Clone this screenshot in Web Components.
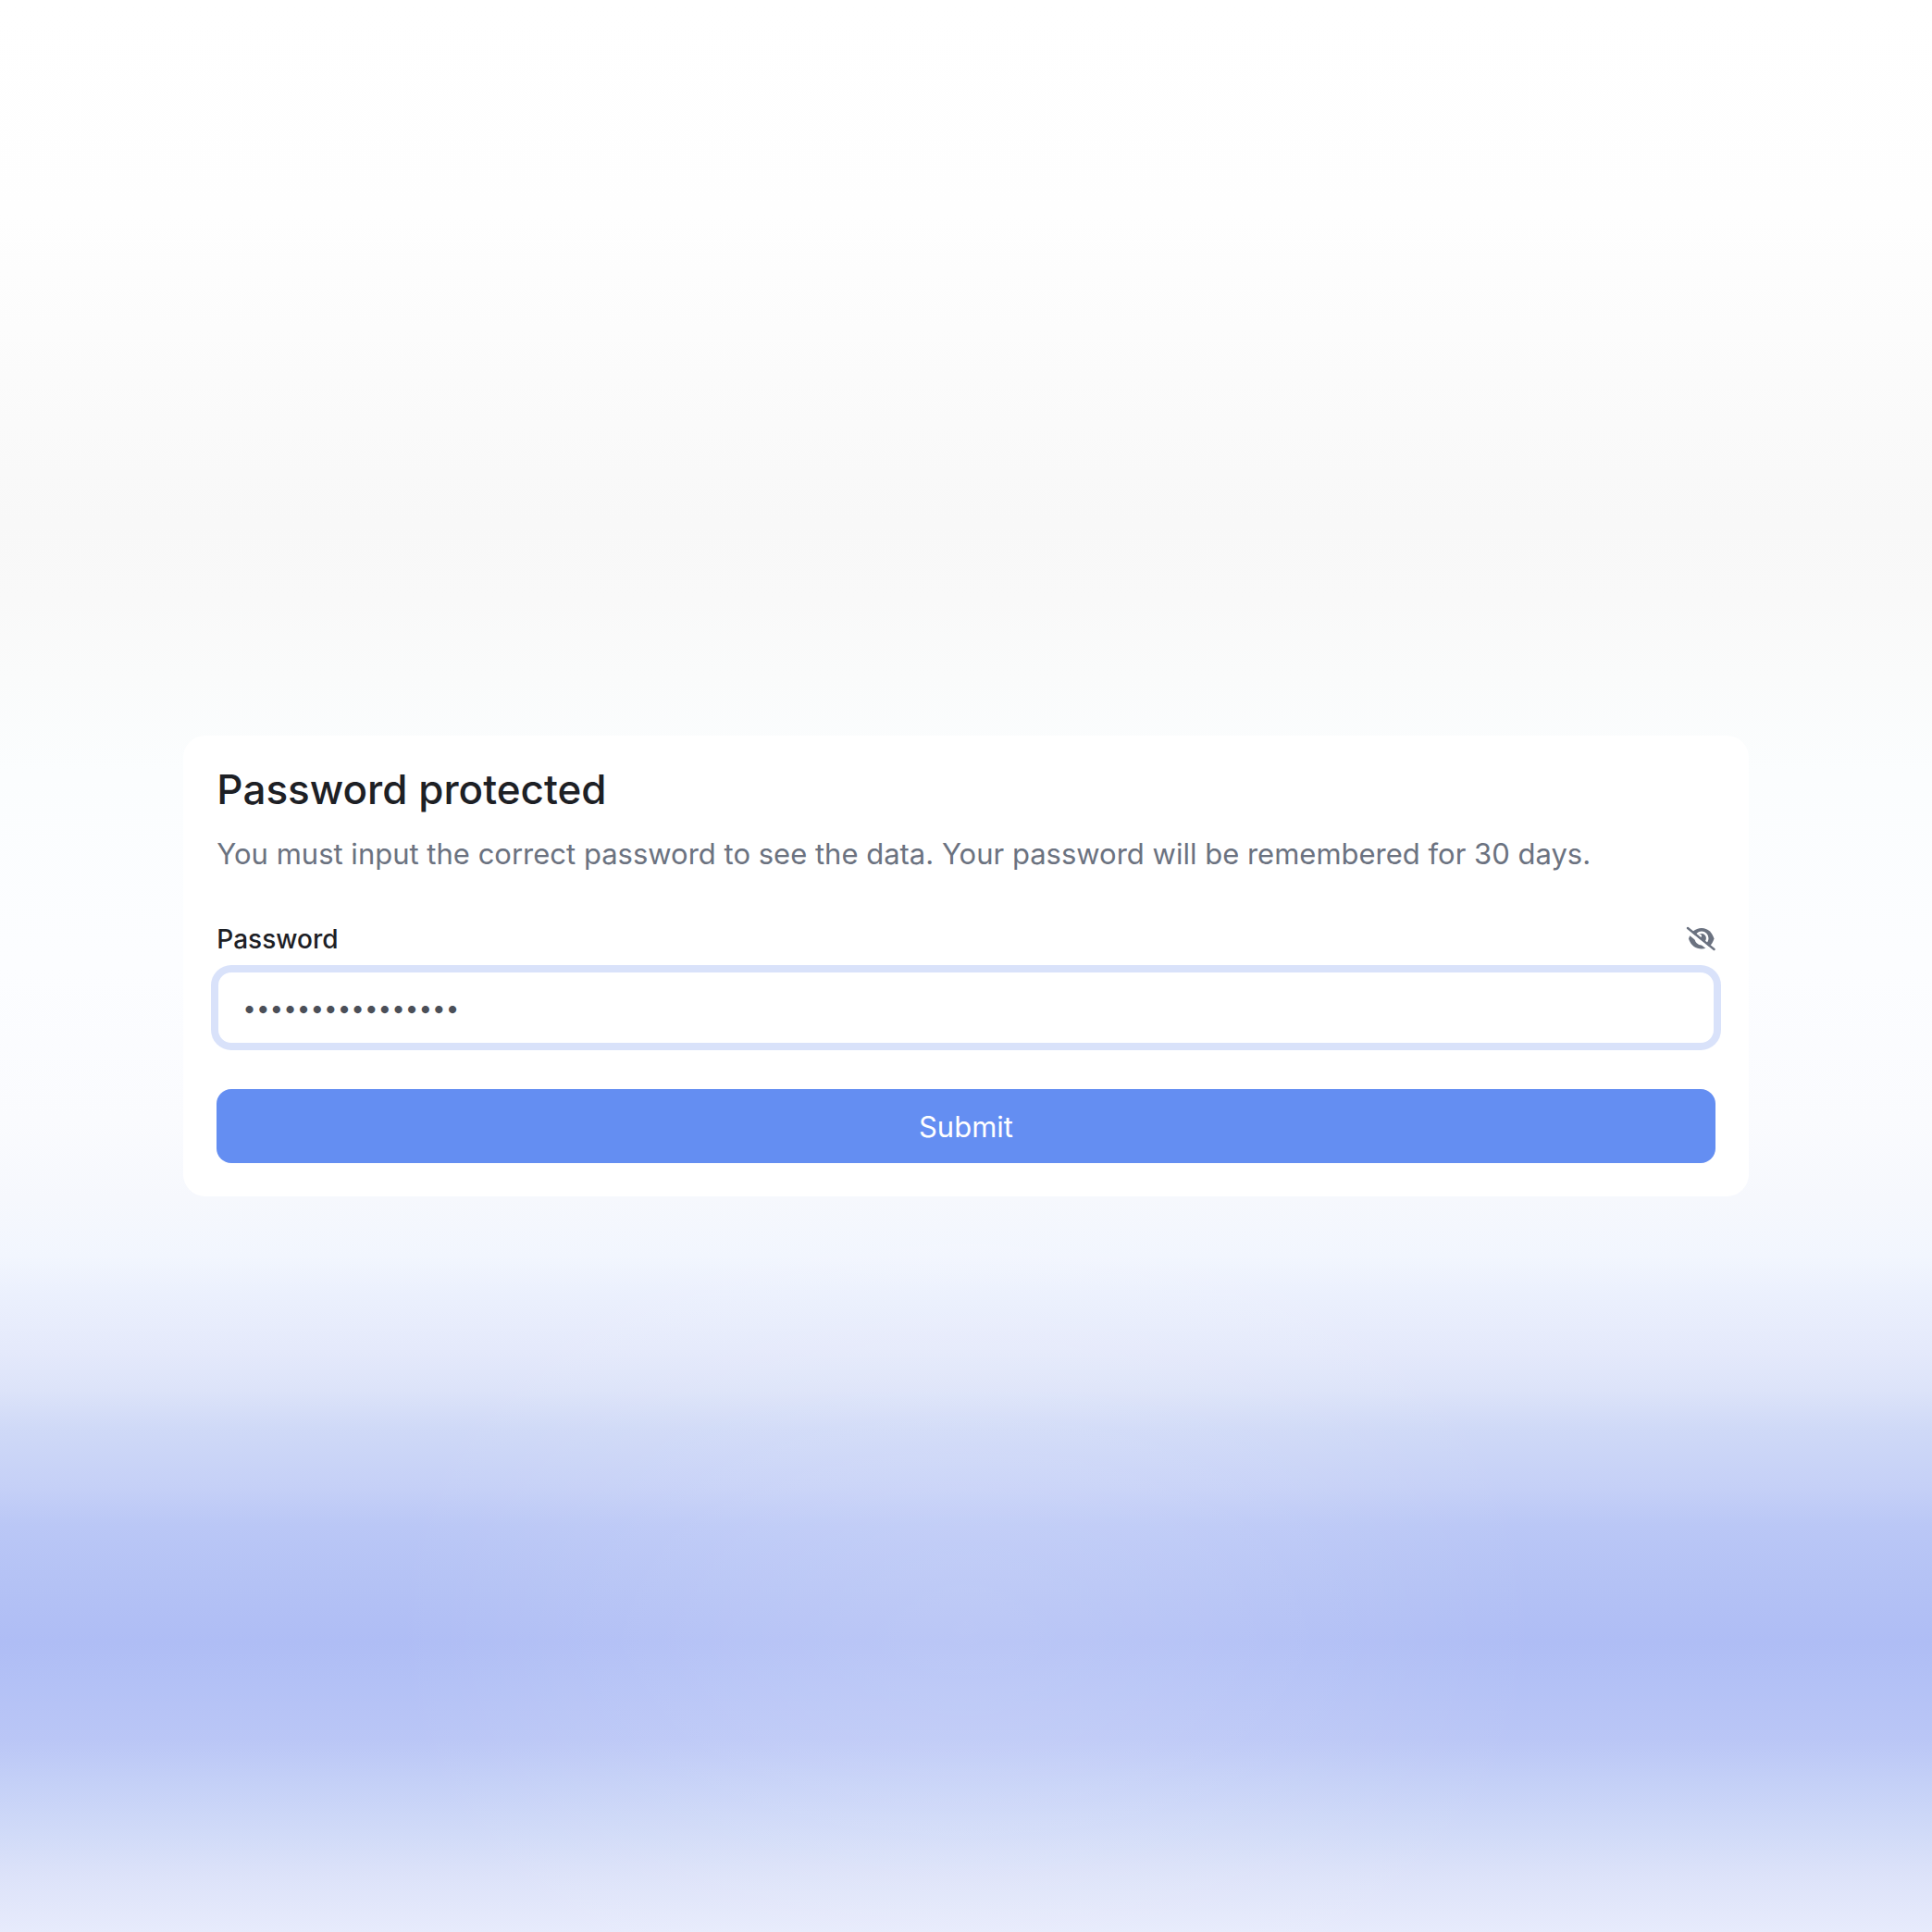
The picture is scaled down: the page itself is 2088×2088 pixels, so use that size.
<!DOCTYPE html>
<html lang="en">
<head>
<meta charset="utf-8">
<title>Password protected</title>
<style>
    body {
        margin: 0;
        font-family: Inter, "Liberation Sans", sans-serif;
    }
</style>
</head>
<body>
<gradient-page>
    <password-card heading="Password protected">
        You must input the correct password to see the data. Your password will be remembered for 30 days.
        <password-field slot="form" label="Password" value="correcthorsebatt"></password-field>
        <submit-button slot="form">Submit</submit-button>
    </password-card>
</gradient-page>

<script>
class GradientPage extends HTMLElement{
    constructor(){
        super();
        this.shadow = this.attachShadow({mode: 'open'});

        let template = document.createElement('template');
        template.innerHTML = `
            <style>
                :host {
                    display: flex;
                    justify-content: center;
                    align-items: center;
                    box-sizing: border-box;
                    min-height: 100vh;
                    background:
                        radial-gradient(ellipse 30% 26% at 50% 84%, rgba(255, 255, 255, 0.15), rgba(255, 255, 255, 0.1) 40%, rgba(255, 255, 255, 0)),
                        linear-gradient(
                            #ffffff 0%,
                            #fefefe 11%,
                            #fcfcfc 17%,
                            #fafafa 22%,
                            #f8f8f8 27%,
                            #f9f9f9 31%,
                            #fafbfb 35%,
                            #fbfdfe 40%,
                            #fcfdff 50%,
                            #fafbfe 58%,
                            #f6f8fd 62%,
                            #f2f6fe 65%,
                            #ebf0fd 67%,
                            #e4e9fb 70%,
                            #dce3f9 72%,
                            #cfd9f7 74%,
                            #c5d0f7 77%,
                            #bac7f6 79%,
                            #b4c2f5 82%,
                            #afbdf5 85%,
                            #b3c1f6 87%,
                            #bac6f6 90%,
                            #c3cff7 92%,
                            #d1dbf8 95%,
                            #dce2f9 97%,
                            #e7ebfc 100%
                        );
                }
                main {
                    width: 81%;
                }
            </style>
            <main><slot></slot></main>
        `;
        this.shadow.appendChild( template.content.cloneNode(true) );
    }
}
customElements.define('gradient-page', GradientPage);

class PasswordCard extends HTMLElement{
    constructor(){
        super();
        this.shadow = this.attachShadow({mode: 'open'});

        let template = document.createElement('template');
        template.innerHTML = `
            <style>
                :host {
                    display: block;
                    padding: 36px;
                    border-radius: 24px;
                    background: #ffffff;
                }
                h1 {
                    margin: 0;
                    font-size: 44px;
                    line-height: 44px;
                    font-weight: 500;
                    color: #1d2025;
                }
                p {
                    margin: 24px 0 48px;
                    font-size: 31px;
                    line-height: 48px;
                    color: #6b7280;
                }
                form {
                    display: flex;
                    flex-direction: column;
                    gap: 48px;
                }
            </style>
            <h1></h1>
            <p><slot></slot></p>
            <form><slot name="form"></slot></form>
        `;
        this.shadow.appendChild( template.content.cloneNode(true) );

        this.headingElement = this.shadow.querySelector('h1');
    }

    get heading(){ return this.getAttribute('heading'); }
    set heading(value){ this.setAttribute('heading', value); }

    connectedCallback(){
        if (this.heading != null){
            this.headingElement.textContent = this.heading;
        }
    }
}
customElements.define('password-card', PasswordCard);

class PasswordField extends HTMLElement{
    constructor(){
        super();
        this.shadow = this.attachShadow({mode: 'open'});

        let template = document.createElement('template');
        template.innerHTML = `
            <style>
                :host {
                    display: block;
                }
                .top {
                    display: flex;
                    justify-content: space-between;
                    align-items: center;
                    margin-bottom: 14px;
                }
                label {
                    font-size: 28px;
                    line-height: 40px;
                    font-weight: 500;
                    color: #1d2025;
                }
                button {
                    display: flex;
                    padding: 0;
                    border: none;
                    background: none;
                    color: #6b7280;
                    cursor: pointer;
                }
                svg {
                    width: 32px;
                    height: 32px;
                }
                input {
                    display: block;
                    box-sizing: border-box;
                    width: 100%;
                    height: 80px;
                    padding: 0 26px;
                    border: 2px solid #d9e2fa;
                    border-radius: 16px;
                    outline: none;
                    box-shadow: 0 0 0 6px #d9e2fa;
                    background: #ffffff;
                    font-family: inherit;
                    font-size: 26px;
                    color: #4b4f58;
                }
            </style>
            <div class="top">
                <label for="password"></label>
                <button type="button" aria-label="Show password">
                    <svg viewBox="0 0 32 32" fill="currentColor">
                        <mask id="cut">
                            <rect width="32" height="32" fill="#ffffff"/>
                            <circle cx="17" cy="15" r="6.200" fill="none" stroke="#000000" stroke-width="2.600"/>
                            <circle cx="15" cy="12.500" r="2" fill="#000000"/>
                            <path d="M-1 5.500L29 29.500" fill="none" stroke="#000000" stroke-width="4"/>
                        </mask>
                        <path d="M3 15.500C5 9 10 4 17 4S28.500 9 30.500 15.500C28.500 22 24 26.500 17 26.500S5 22 3 15.500Z" mask="url(#cut)"/>
                        <path d="M2 4L30.500 27" fill="none" stroke="currentColor" stroke-width="2.400" stroke-linecap="round"/>
                    </svg>
                </button>
            </div>
            <input id="password" type="password">
        `;
        this.shadow.appendChild( template.content.cloneNode(true) );

        this.labelElement = this.shadow.querySelector('label');
        this.inputElement = this.shadow.querySelector('input');
        this.toggleElement = this.shadow.querySelector('button');
    }

    get label(){ return this.getAttribute('label'); }
    set label(value){ this.setAttribute('label', value); }

    get value(){ return this.getAttribute('value'); }
    set value(value){ this.setAttribute('value', value); }

    connectedCallback(){
        if (this.label != null){
            this.labelElement.textContent = this.label;
        }
        if (this.value != null){
            this.inputElement.value = this.value;
        }
        this.toggleElement.addEventListener('click', () => {
            this.inputElement.type = this.inputElement.type == 'password' ? 'text' : 'password';
        });
    }
}
customElements.define('password-field', PasswordField);

class SubmitButton extends HTMLElement{
    constructor(){
        super();
        this.shadow = this.attachShadow({mode: 'open'});

        let template = document.createElement('template');
        template.innerHTML = `
            <style>
                :host {
                    display: block;
                }
                button {
                    display: block;
                    width: 100%;
                    height: 80px;
                    border: none;
                    border-radius: 16px;
                    background: #648ef2;
                    font-family: inherit;
                    font-size: 31px;
                    color: #ffffff;
                    cursor: pointer;
                }
            </style>
            <button type="submit"><slot></slot></button>
        `;
        this.shadow.appendChild( template.content.cloneNode(true) );
    }
}
customElements.define('submit-button', SubmitButton);
</script>
</body>
</html>
